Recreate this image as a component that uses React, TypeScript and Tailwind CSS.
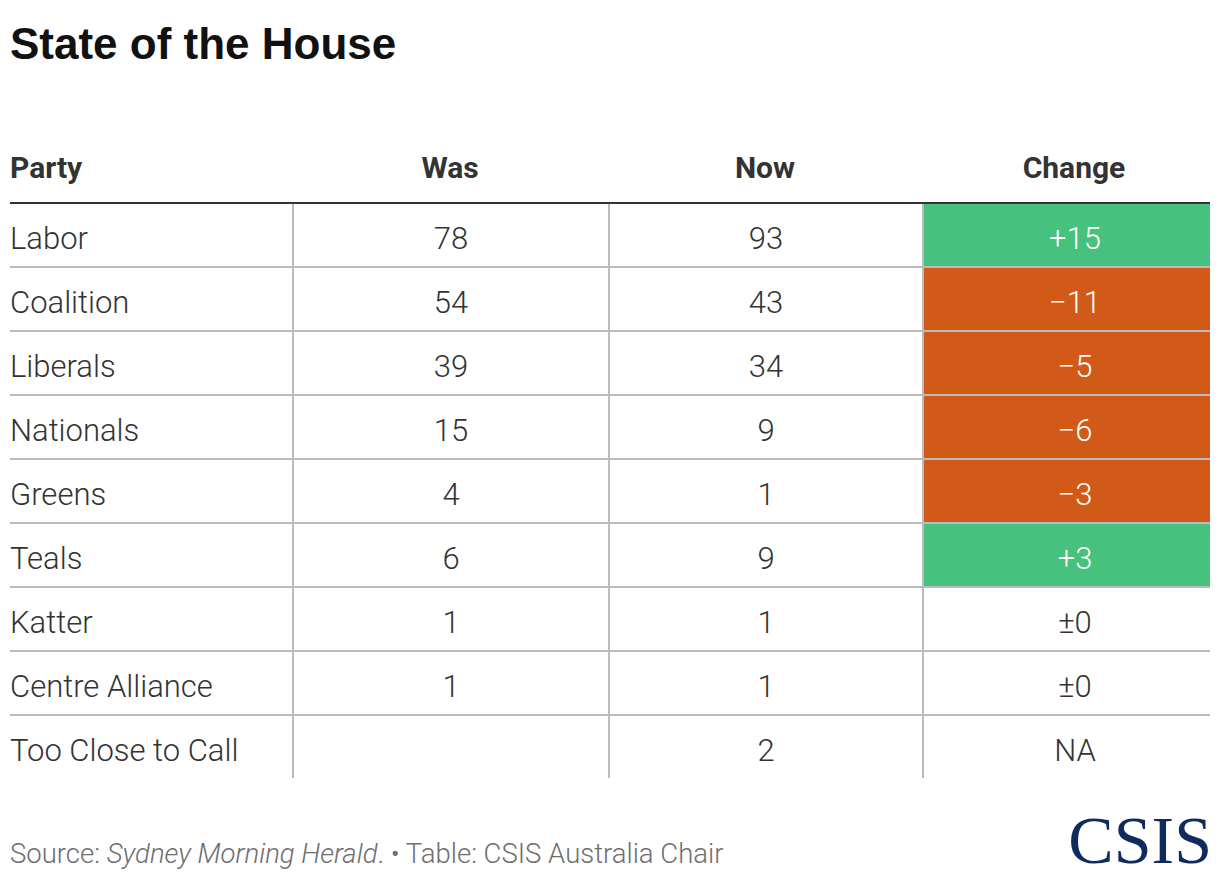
import React from "react";

type Row = {
  party: string;
  was: string;
  now: string;
  change: string;
  tone: "up" | "down" | "flat";
};

const rows: Row[] = [
  { party: "Labor", was: "78", now: "93", change: "+15", tone: "up" },
  { party: "Coalition", was: "54", now: "43", change: "\u221211", tone: "down" },
  { party: "Liberals", was: "39", now: "34", change: "\u22125", tone: "down" },
  { party: "Nationals", was: "15", now: "9", change: "\u22126", tone: "down" },
  { party: "Greens", was: "4", now: "1", change: "\u22123", tone: "down" },
  { party: "Teals", was: "6", now: "9", change: "+3", tone: "up" },
  { party: "Katter", was: "1", now: "1", change: "\u00b10", tone: "flat" },
  { party: "Centre Alliance", was: "1", now: "1", change: "\u00b10", tone: "flat" },
  { party: "Too Close to Call", was: "", now: "2", change: "NA", tone: "flat" },
];

const toneClass = {
  up: "bg-[#46c17e] text-white",
  down: "bg-[#d15a19] text-white",
  flat: "text-[#333333]",
};

const App = () => {
  return (
    <div className="w-[1220px] h-[878px] bg-white overflow-hidden font-['Roboto',sans-serif] text-[#333333]">
      <div className="h-[136px] pl-[10px] pt-[22px]">
        <h1 className="font-['Liberation_Sans',Arial,sans-serif] font-bold text-[44px] leading-none text-[#111111]">
          State of the House
        </h1>
      </div>

      <div className="ml-[10px] w-[1200px] grid grid-cols-[282px_316px_314px_288px] text-[31px] leading-none">
        <div className="h-[68px] pb-[2px] border-b-2 border-[#333333] flex items-center font-bold text-[30px]">
          Party
        </div>
        <div className="h-[68px] pb-[2px] border-b-2 border-[#333333] flex items-center justify-center font-bold text-[30px]">
          Was
        </div>
        <div className="h-[68px] pb-[2px] border-b-2 border-[#333333] flex items-center justify-center font-bold text-[30px]">
          Now
        </div>
        <div className="h-[68px] pb-[2px] pl-[16px] border-b-2 border-[#333333] flex items-center justify-center font-bold text-[30px]">
          Change
        </div>

        {rows.map((row, i) => {
          const last = i === rows.length - 1;
          const line = last ? "h-[62px]" : "h-[64px] border-b-2 border-[#bbbbbb]";
          return (
            <React.Fragment key={row.party}>
              <div className={`${line} pt-[7px] font-light flex items-center`}>{row.party}</div>
              <div className={`${line} pt-[7px] font-light border-l-2 border-l-[#bbbbbb] flex items-center justify-center`}>
                {row.was}
              </div>
              <div className={`${line} pt-[7px] font-light border-l-2 border-l-[#bbbbbb] flex items-center justify-center`}>
                {row.now}
              </div>
              <div
                className={`${line} ${toneClass[row.tone]} pt-[7px] font-light border-l-2 border-l-[#bbbbbb] pl-[16px] flex items-center justify-center`}
              >
                {row.change}
              </div>
            </React.Fragment>
          );
        })}
      </div>

      <div className="flex justify-between items-start pl-[10px] pr-[8px]">
        <p className="mt-[62px] text-[27.5px] leading-none font-light text-[#6e6e6e] whitespace-nowrap">
          Source: <span className="italic">Sydney Morning Herald</span>. • Table: CSIS Australia Chair
        </p>
        <div className="mt-[28px] font-['Liberation_Serif','Times_New_Roman',serif] text-[68px] leading-none text-[#0f2a5c]">
          CSIS
        </div>
      </div>
    </div>
  );
};

export default App;
